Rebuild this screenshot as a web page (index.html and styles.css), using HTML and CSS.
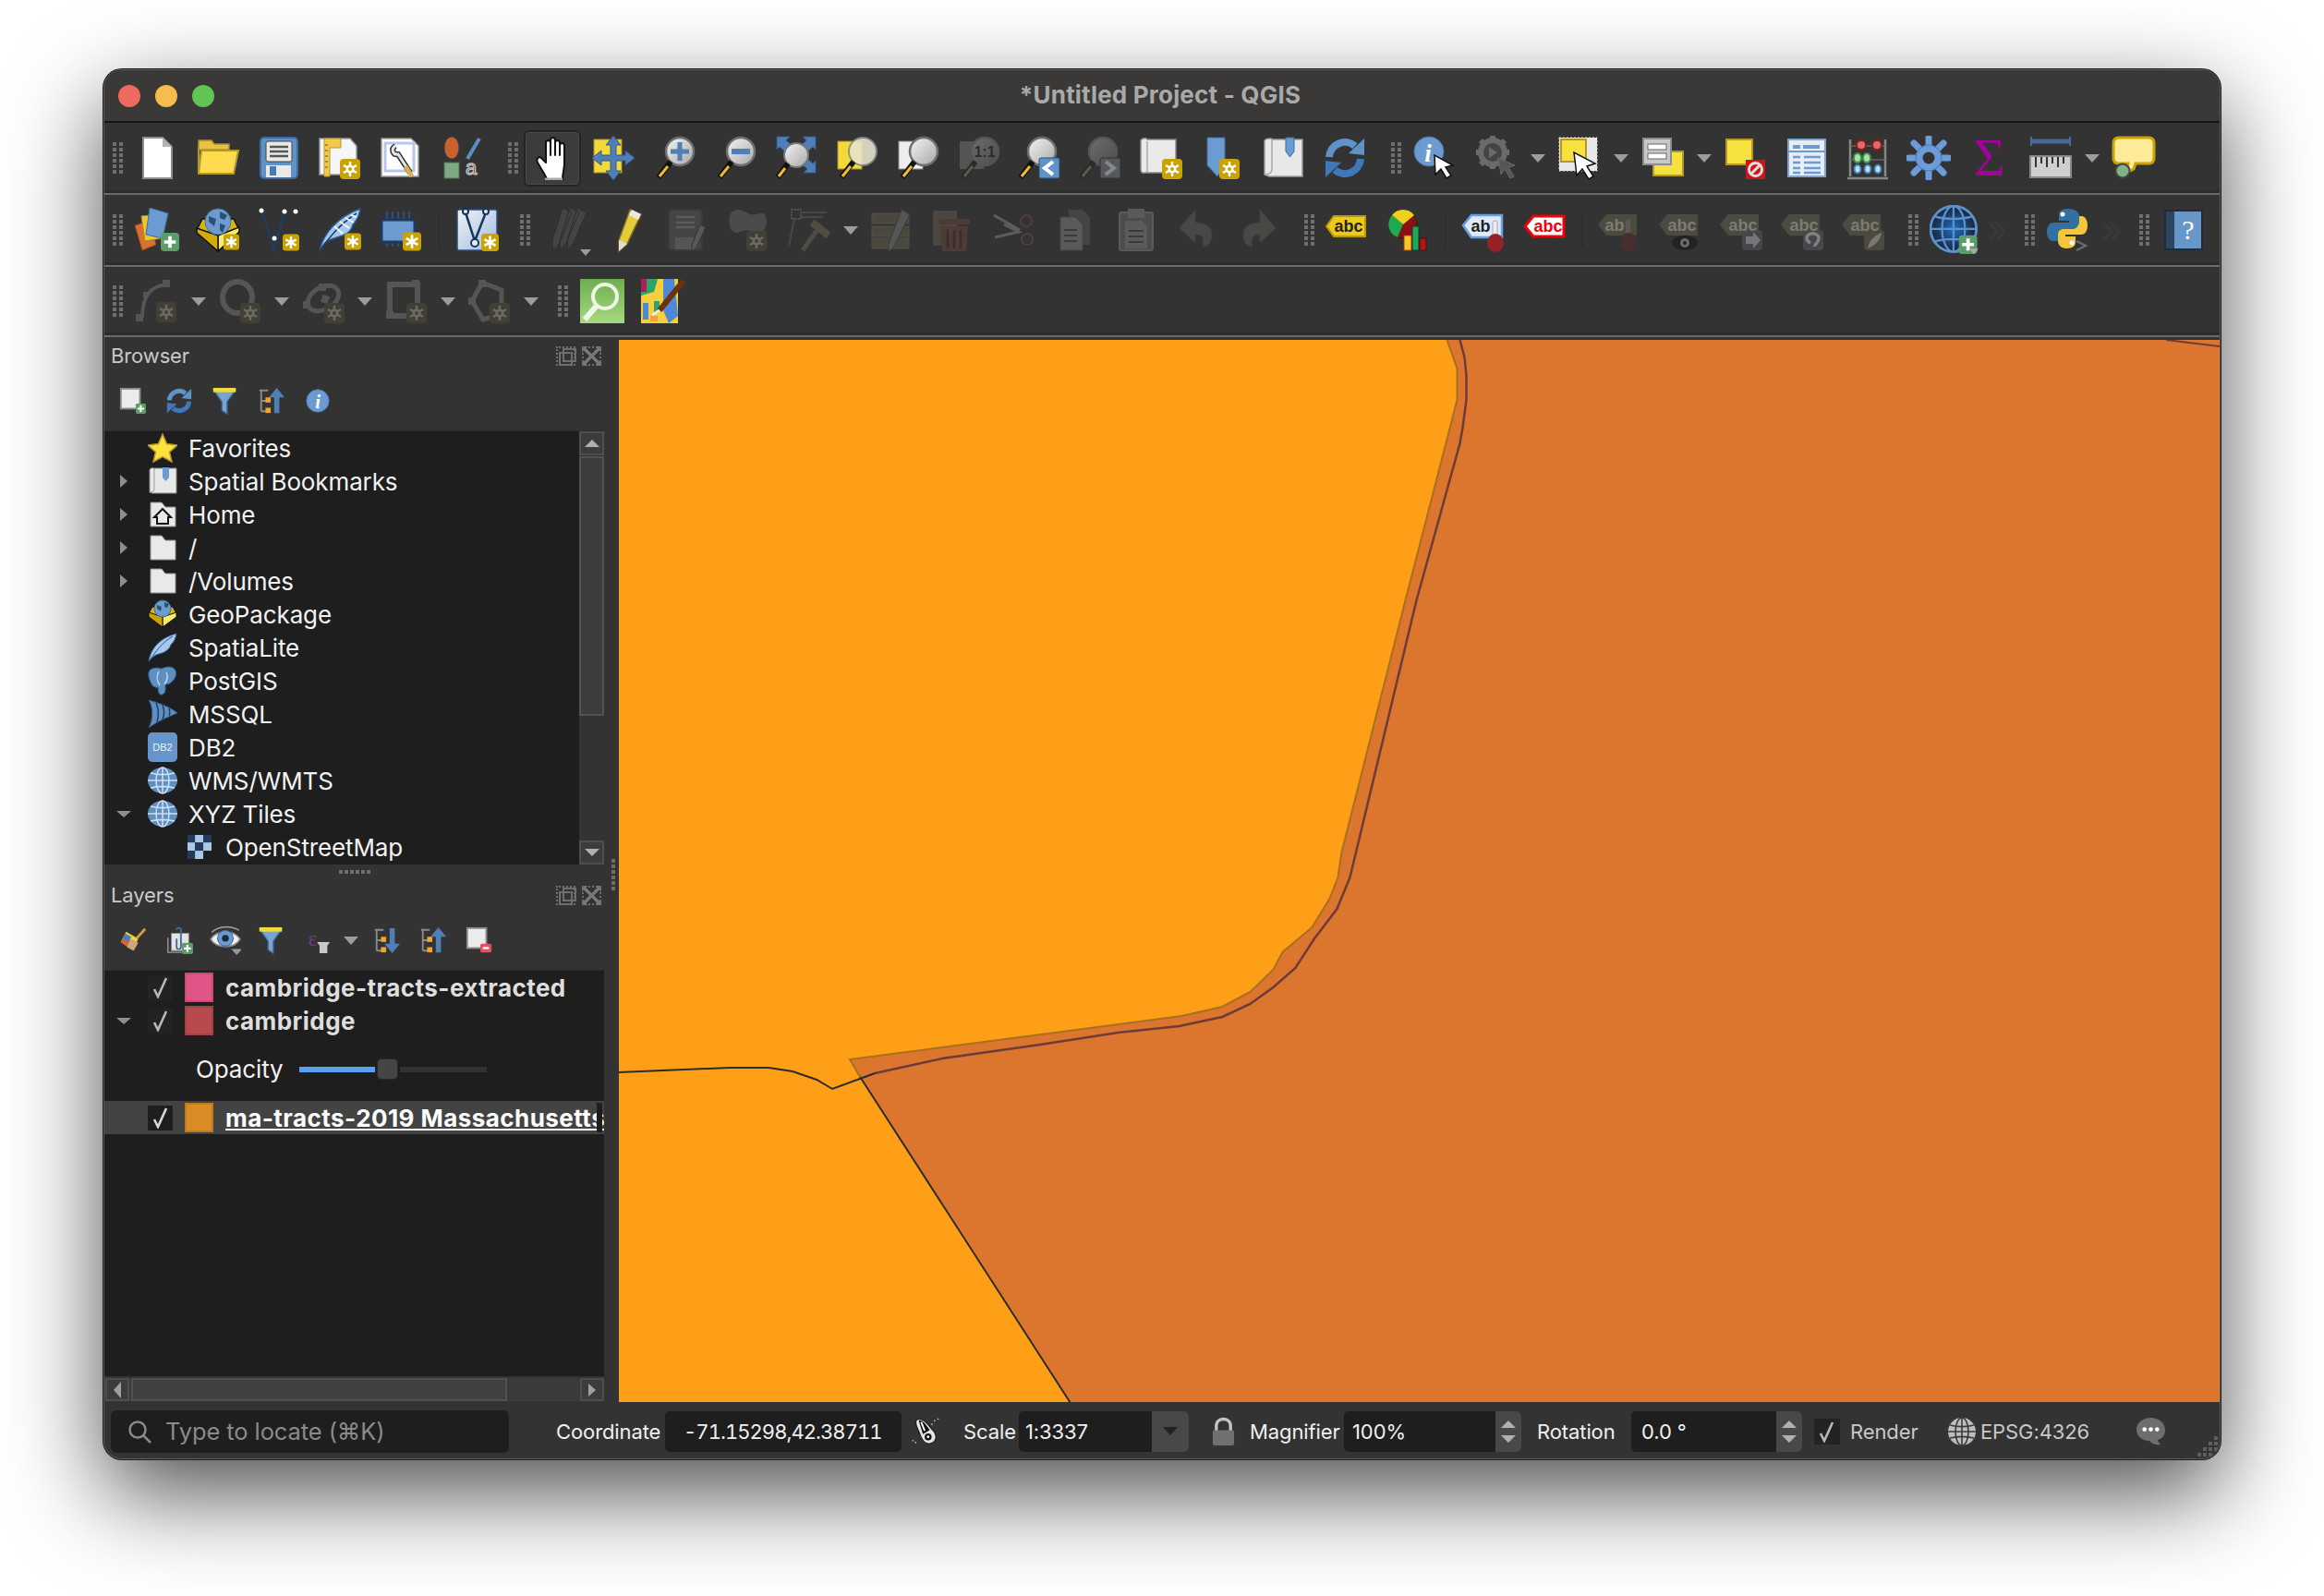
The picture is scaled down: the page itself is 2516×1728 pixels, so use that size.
FILE: index.html
```html
<!DOCTYPE html>
<html lang="en">
<head>
  <meta charset="UTF-8">
  <title>*Untitled Project - QGIS</title>
  <link rel="stylesheet" href="styles.css">
</head>
<body>

<!-- shared icons -->
<svg class="defs" xmlns="http://www.w3.org/2000/svg">
  <defs>
    <linearGradient id="gg" x1="0" y1="0" x2="1" y2="1"><stop offset="0" stop-color="#f4f4f4"/><stop offset="1" stop-color="#a8a8a8"/></linearGradient>
    <linearGradient id="gd" x1="0" y1="0" x2="1" y2="1"><stop offset="0" stop-color="#6e6e6e"/><stop offset="1" stop-color="#4c4c4c"/></linearGradient>
    <linearGradient id="gb" x1="0" y1="0" x2="1" y2="1"><stop offset="0" stop-color="#eef2f8"/><stop offset="1" stop-color="#a3bbd9"/></linearGradient>
    <radialGradient id="gw"><stop offset="0" stop-color="#1f6fc0"/><stop offset="1" stop-color="#1a2433"/></radialGradient>
    <linearGradient id="gh" x1="0" y1="1" x2="0" y2="0"><stop offset="0" stop-color="#a6d97e"/><stop offset="1" stop-color="#6fae52"/></linearGradient>
  </defs>

  <!-- badges -->
  <symbol id="b-gold" viewBox="0 0 22 22"><rect width="22" height="22" rx="4" fill="#c9a204"/><path d="M11 3v16M4 7l14 8M18 7L4 15" stroke="#fff" stroke-width="3"/></symbol>
  <symbol id="b-gear" viewBox="0 0 22 22"><rect width="22" height="22" rx="4" fill="#c9a204"/><path d="M11 3v16M4 7l14 8M18 7L4 15" stroke="#fff" stroke-width="2.4"/><circle cx="11" cy="11" r="4.5" fill="#fff"/><circle cx="11" cy="11" r="2" fill="#c9a204"/></symbol>
  <symbol id="b-off" viewBox="0 0 22 22"><rect width="22" height="22" rx="4" fill="#423f36"/><path d="M11 3v16M4 7l14 8M18 7L4 15" stroke="#6e6b62" stroke-width="2.4"/><circle cx="11" cy="11" r="4.5" fill="#6e6b62"/><circle cx="11" cy="11" r="2" fill="#423f36"/></symbol>
  <symbol id="b-plus" viewBox="0 0 22 22"><rect width="22" height="22" rx="4" fill="#5c9c66"/><path d="M11 4v14M4 11h14" stroke="#fff" stroke-width="4"/></symbol>

  <symbol id="mag" viewBox="0 0 48 48"><circle cx="30" cy="17" r="15" fill="url(#gg)" stroke="#6f6f6f" stroke-width="2.5"/><path d="M20 28L7 45" stroke="#111" stroke-width="6"/><path d="M17 33L8 44" stroke="#f0bb2e" stroke-width="3"/></symbol>
  <symbol id="mag-off" viewBox="0 0 48 48"><circle cx="30" cy="17" r="15" fill="url(#gd)" stroke="#555" stroke-width="2.5"/><path d="M20 28L7 45" stroke="#2a2a2a" stroke-width="6"/><path d="M17 33L8 44" stroke="#5b5a4c" stroke-width="3"/></symbol>
  <symbol id="s-check" viewBox="0 0 24 24"><path d="M5 14l4 8L18 2" fill="none" stroke="currentColor" stroke-width="2.6"/></symbol>

  <!-- row 1 -->
  <symbol id="i-new" viewBox="0 0 48 48"><path d="M9 2h21l10 10v34H9z" fill="#fff" stroke="#8d8d8d" stroke-width="2"/><path d="M30 2v10h10z" fill="#b4b4b4"/></symbol>
  <symbol id="i-open" viewBox="0 0 48 48"><path d="M3 5h14l3 4h16v6H3z" fill="#e8c440" stroke="#a98f2c" stroke-width="1.5"/><path d="M3 41L6 16h40l-5 25z" fill="#ffdb4f" stroke="#b3982f" stroke-width="2"/><path d="M3 41V12" stroke="#b3982f" stroke-width="2"/></symbol>
  <symbol id="i-save" viewBox="0 0 48 48"><rect x="4" y="2" width="40" height="44" rx="4" fill="#5f93c8" stroke="#3f6c9e" stroke-width="2"/><rect x="10" y="6" width="28" height="22" rx="2" fill="#e9e9e9" stroke="#444"/><path d="M14 12h20M14 17h20M14 22h20" stroke="#555" stroke-width="2.5"/><rect x="10" y="32" width="27" height="13" fill="#e9e9e9"/><rect x="14" y="33" width="7" height="10" fill="#4a7bad"/></symbol>
  <symbol id="i-layout" viewBox="0 0 48 48"><path d="M2 3h33l7 8v31H2z" fill="#f4f6fa" stroke="#9a9a9a" stroke-width="1.5"/><path d="M7 3h18v10H13v31H7z" fill="#f3c94a" stroke="#b3982f"/><path d="M8 10h3M8 16h3M8 22h3M8 28h3M8 34h3" stroke="#96792a" stroke-width="1.4"/><use href="#b-gear" x="24" y="25" width="22" height="22"/></symbol>
  <symbol id="i-layoutmgr" viewBox="0 0 48 48"><path d="M3 3h32l8 8v33H3z" fill="#fff" stroke="#9a9a9a" stroke-width="1.5"/><rect x="7" y="8" width="31" height="30" fill="none" stroke="#b7c7ea" stroke-width="3"/><path d="M18 11c-5 3-3 10 3 9l13 20" stroke="#333" stroke-width="6" fill="none"/><path d="M18 11c-5 3-3 10 3 9l13 20" stroke="#e4e4e4" stroke-width="3" fill="none"/><path d="M29 33l7 11" stroke="#d8b04a" stroke-width="5"/></symbol>
  <symbol id="i-style" viewBox="0 0 48 48"><ellipse cx="13" cy="13" rx="8" ry="12" fill="#c9622f" stroke="#444"/><path d="M43 3L30 25" stroke="#5a8fc4" stroke-width="4"/><rect x="5" y="29" width="16" height="17" fill="#7fa982" stroke="#4f6f52"/></symbol>
  <symbol id="i-hand" viewBox="0 0 48 48"><path d="M16 47C14 41 9 35 6 29c-2-4 1-7 4-5l5 5V8c0-4 5-4 5 0v13V5c0-4 5-4 5 0v16V8c0-4 5-4 5 0v13-10c0-4 5-4 5 0v19c0 6-2 10-2 17z" fill="#fff" stroke="#111" stroke-width="2" stroke-linejoin="round"/><path d="M14 47h19" stroke="#aaa" stroke-width="3"/></symbol>
  <symbol id="i-pan" viewBox="0 0 48 48"><rect x="3" y="4" width="30" height="36" fill="#f4d93a" stroke="#a98f2c"/><path d="M24 0l8 10h-5v11h10v-5l10 8-10 8v-5H27v11h5l-8 10-8-10h5V27H11v5L1 24l10-8v5h10V10h-5z" fill="#4f7fb4" stroke="#2f5a8c"/></symbol>
  <symbol id="i-zin" viewBox="0 0 48 48"><use href="#mag" width="48" height="48"/><path d="M30 7v20M20 17h20" stroke="#4f7fb4" stroke-width="5"/></symbol>
  <symbol id="i-zout" viewBox="0 0 48 48"><use href="#mag" width="48" height="48"/><path d="M20 17h20" stroke="#4f7fb4" stroke-width="6"/></symbol>
  <symbol id="i-zfull" viewBox="0 0 48 48"><path d="M3 1h14l-4 4 8 7-7 7-8-7-3 3zM45 1H31l4 4-8 7 7 7 8-7 3 3zM45 40H32l4-4-7-6 6-6 7 6 3-3z" fill="#4f7fb4" stroke="#2f5a8c"/><circle cx="24" cy="21" r="13" fill="url(#gg)" stroke="#777" stroke-width="2"/><path d="M15 30L4 45" stroke="#111" stroke-width="6"/><path d="M12 35L5 44" stroke="#f0bb2e" stroke-width="3"/></symbol>
  <symbol id="i-zsel" viewBox="0 0 48 48"><rect x="3" y="6" width="26" height="30" fill="#f4d93a" stroke="#a98f2c"/><circle cx="30" cy="17" r="15" fill="#e8e3cc" opacity=".9" stroke="#8b8b8b" stroke-width="2"/><path d="M20 28L7 45" stroke="#111" stroke-width="6"/><path d="M17 33L8 44" stroke="#f0bb2e" stroke-width="3"/></symbol>
  <symbol id="i-zlayer" viewBox="0 0 48 48"><rect x="3" y="6" width="26" height="30" fill="#eee" stroke="#8b8b8b"/><use href="#mag" width="48" height="48"/></symbol>
  <symbol id="i-z11" viewBox="0 0 48 48"><rect x="3" y="6" width="26" height="30" fill="#555"/><use href="#mag-off" width="48" height="48"/></symbol>
  <symbol id="i-zlast" viewBox="0 0 48 48"><use href="#mag" width="48" height="48" x="-4"/><rect x="23" y="24" width="22" height="22" rx="2" fill="#5f93c8" stroke="#2f4f73"/><path d="M38 28l-9 7 9 7" stroke="#fff" stroke-width="4" fill="none"/></symbol>
  <symbol id="i-znext" viewBox="0 0 48 48"><use href="#mag-off" width="48" height="48" x="-4"/><rect x="23" y="24" width="22" height="22" rx="2" fill="#55585c" stroke="#333"/><path d="M29 28l9 7-9 7" stroke="#888" stroke-width="4" fill="none"/></symbol>
  <symbol id="i-newmap" viewBox="0 0 48 48"><path d="M8 4h31v36H10l-7 0c-2 0-2-3-2-5V6c0-4 7-4 7-2z" fill="#eaeaea" stroke="#8a8a8a" stroke-width="1.5"/><path d="M3 40c5 0 6-2 5-6V6" fill="none" stroke="#aaa" stroke-width="1.5"/><use href="#b-gear" x="24" y="25" width="22" height="22"/></symbol>
  <symbol id="i-newbm" viewBox="0 0 48 48"><path d="M7 2h19v30l-8 12-11-12z" fill="#6b9bd1" stroke="#3f6c9e"/><use href="#b-gear" x="20" y="25" width="22" height="22"/></symbol>
  <symbol id="i-bm" viewBox="0 0 48 48"><path d="M11 4h33v40H8l-5-2V6c0-3 8-4 8-2z" fill="#e8e8e8" stroke="#9a9a9a" stroke-width="1.5"/><path d="M3 42c5 0 8-2 8-6V4" fill="none" stroke="#aaa" stroke-width="1.5"/><path d="M26 2h9v15l-4.500 6-4.500-6z" fill="#6b9bd1" stroke="#3f6c9e"/></symbol>
  <symbol id="i-refresh" viewBox="0 0 48 48"><path d="M7 23A17 17 0 0 1 35 11" fill="none" stroke="#5f93c8" stroke-width="8"/><path d="M28 19L45 21V3z" fill="#5f93c8"/><path d="M41 25A17 17 0 0 1 13 37" fill="none" stroke="#3f78b8" stroke-width="8"/><path d="M20 29L3 27V45z" fill="#3f78b8"/></symbol>
  <symbol id="i-identify" viewBox="0 0 48 48"><circle cx="17" cy="17" r="16" fill="#6b9bd1" stroke="#4a7bad"/></symbol>
  <symbol id="i-cursor" viewBox="0 0 48 48"><path d="M23 21l1 21 6-6 6 10 5-3-6-9 8-2z" fill="#fff" stroke="#111" stroke-width="1.5"/></symbol>
  <symbol id="i-actions" viewBox="0 0 48 48"><circle cx="20" cy="18" r="13" fill="#444" stroke="#6a6a6a" stroke-width="6"/><path d="M20 0v6M20 30v6M2 18h6M32 18h6M7 5l4 4M33 5l-4 4M7 31l4-4" stroke="#6a6a6a" stroke-width="6"/><path d="M16 12l9 6-9 6z" fill="#6a6a6a"/><path d="M26 24l3 18 4-6 6 10 4-2-6-10 7-2z" fill="#565656" stroke="#6a6a6a"/></symbol>
  <symbol id="i-select" viewBox="0 0 48 48"><rect x="2" y="2" width="41" height="36" fill="#e8e8e8" stroke="#ddd" stroke-dasharray="2 2"/><rect x="4" y="4" width="27" height="24" fill="#f7e13e" stroke="#b3982f" stroke-width="2"/><path d="M18 18l3 25 6-7 7 11 5-3-7-11 9-3z" fill="#fff" stroke="#111" stroke-width="1.5"/></symbol>
  <symbol id="i-selby" viewBox="0 0 48 48"><rect x="14" y="17" width="32" height="26" fill="#f7e13e" stroke="#b3982f" stroke-width="2"/><rect x="3" y="3" width="30" height="28" fill="#c8c8c8" stroke="#8c8c8c" stroke-width="2"/><rect x="8" y="9" width="20" height="6" fill="#fff" stroke="#666"/><rect x="8" y="19" width="20" height="6" fill="#fff" stroke="#666"/></symbol>
  <symbol id="i-desel" viewBox="0 0 48 48"><rect x="3" y="4" width="28" height="27" fill="#f7e13e" stroke="#b3982f" stroke-width="2"/><rect x="24" y="26" width="21" height="21" fill="#c8171b"/><circle cx="34.500" cy="36.500" r="7" fill="none" stroke="#f3d9d9" stroke-width="3"/><path d="M30 41l9-9" stroke="#f3d9d9" stroke-width="3"/></symbol>
  <symbol id="i-table" viewBox="0 0 48 48"><rect x="4" y="4" width="40" height="40" fill="#e6edf7" stroke="#7ea3cf" stroke-width="2"/><path d="M9 10h8v4H9zM20 10h18v4H20z" fill="#6b9bd1"/><path d="M4 17h40" stroke="#6b9bd1" stroke-width="2"/><path d="M9 23h8M21 23h18M9 29h8M21 29h18M9 35h8M21 35h18M9 40h8M21 40h18" stroke="#6b9bd1" stroke-width="2.5"/></symbol>
  <symbol id="i-calc" viewBox="0 0 48 48"><path d="M5 4v40M43 4v40M2 46h44" stroke="#888" stroke-width="2.500"/><path d="M5 11h38M5 26h38" stroke="#666" stroke-width="1.500"/><circle cx="17" cy="10" r="5" fill="#e06a6a" stroke="#8c1d1d" stroke-width="2"/><circle cx="34" cy="10" r="5" fill="#e06a6a" stroke="#8c1d1d" stroke-width="2"/><ellipse cx="13" cy="24" rx="4" ry="5" fill="#a9e0a0" stroke="#3f8f4a" stroke-width="2"/><ellipse cx="23" cy="24" rx="4" ry="5" fill="#a9e0a0" stroke="#3f8f4a" stroke-width="2"/><ellipse cx="13" cy="36" rx="3.500" ry="4.500" fill="#b8e0f4" stroke="#3f7fb4" stroke-width="2"/><ellipse cx="24" cy="36" rx="3.500" ry="4.500" fill="#b8e0f4" stroke="#3f7fb4" stroke-width="2"/><ellipse cx="35" cy="36" rx="3.500" ry="4.500" fill="#b8e0f4" stroke="#3f7fb4" stroke-width="2"/></symbol>
  <symbol id="i-gear" viewBox="0 0 48 48"><path d="M24 2v44M2 24h44M8 8l32 32M40 8L8 40" stroke="#6b9bd9" stroke-width="7" stroke-linecap="round"/><circle cx="24" cy="24" r="14" fill="#6b9bd9" stroke="#4a78b4"/><circle cx="24" cy="24" r="6.500" fill="#333"/></symbol>
  <symbol id="i-measure" viewBox="0 0 48 48"><path d="M4 6h40" stroke="#446b9a" stroke-width="5"/><path d="M3 1v10M45 1v10" stroke="#446b9a" stroke-width="2"/><rect x="2" y="22" width="44" height="23" fill="#cfcfcf" stroke="#888" stroke-width="2"/><path d="M8 23v11M14 23v7M20 23v11M26 23v7M32 23v11M38 23v7" stroke="#333" stroke-width="2"/></symbol>
  <symbol id="i-annot" viewBox="0 0 48 48"><path d="M8 2h32c4 0 6 2 6 6v16c0 4-2 6-6 6H26l-2 6-8 4 2-10H8c-4 0-6-2-6-6V8c0-4 2-6 6-6z" fill="#fdeb97" stroke="#c9a204" stroke-width="3"/><circle cx="12" cy="38" r="7.500" fill="#7fb386" stroke="#444" stroke-width="2"/></symbol>

  <!-- row 2 -->
  <symbol id="i-dsm" viewBox="0 0 48 48"><path d="M0 19l16-5 7 26-15 6z" fill="#d8702f" stroke="#8a4a20"/><path d="M7 9l18-2 4 26-18 3z" fill="#f4c62e" stroke="#a98f2c"/><path d="M16 0l20 6-6 27-18-4z" fill="#6b9bd1" stroke="#3f6c9e"/><use href="#b-plus" x="28" y="26" width="20" height="22"/></symbol>
  <symbol id="i-gpkg" viewBox="0 0 48 48"><path d="M1 24l23 23 23-23-6-12H7z" fill="#d9b50c" stroke="#111" stroke-width="1.500"/><path d="M24 30l23-9v5L24 47z" fill="#f7ee6a" stroke="#111" stroke-width="1.500"/><path d="M1 22l23 8v17L1 27z" fill="#d3ad06" stroke="#111" stroke-width="1.500"/><circle cx="24" cy="15" r="14" fill="#6b9bd1" stroke="#4a6f9a"/><path d="M14 9l8 3-2 8-6-5zM26 4l8 4-3 5-5-2zM26 17l6 2-3 8-3-3z" fill="#2f4f73"/><use href="#b-gold" x="30" y="27" width="17" height="20"/></symbol>
  <symbol id="i-verts" viewBox="0 0 48 48"><path d="M5 2l14 43L30 4" stroke="#1f3d63" stroke-width="2.500" fill="none"/><circle cx="5" cy="3" r="2.500" fill="#fff"/><circle cx="30" cy="4" r="2.500" fill="#fff"/><circle cx="42" cy="4" r="2.500" fill="#fff"/><circle cx="19" cy="33" r="2.500" fill="#fff"/><use href="#b-gold" x="28" y="28" width="18" height="19"/></symbol>
  <symbol id="i-feather" viewBox="0 0 48 48"><path d="M2 47C5 30 20 10 46 1c-1 8-4 13-8 17-1 6-6 10-11 12-7 3-15 3-20 9z" fill="#a6c8ee" stroke="#2d5a8f" stroke-width="1.500"/><path d="M2 47C12 32 26 16 42 6" stroke="#1f3d63" stroke-width="1.500" fill="none"/><path d="M18 20l9 8M24 15l10 7M30 11l9 5M36 8l6 2" stroke="#f2f7fd" stroke-width="2" fill="none"/><use href="#b-gold" x="29" y="26" width="18" height="21"/></symbol>
  <symbol id="i-mesh" viewBox="0 0 48 48"><path d="M9 4v38M15 4v38M21 4v38M27 4v38M33 4v38" stroke="#2a4f80" stroke-width="2"/><rect x="3" y="13" width="36" height="24" rx="2" fill="#6b9bd1" stroke="#1c3a62" stroke-width="3"/><use href="#b-gold" x="26" y="26" width="20" height="21"/></symbol>
  <symbol id="i-virtual" viewBox="0 0 48 48"><rect x="2" y="2" width="43" height="44" rx="2" fill="url(#gb)" stroke="#2c4f80" stroke-width="1.500"/><path d="M11 5l10 31L33 5" stroke="#14365f" stroke-width="2.500" fill="none"/><circle cx="21" cy="38" r="4" fill="#eee" stroke="#14365f" stroke-width="2"/><circle cx="11" cy="4" r="3" fill="#eee" stroke="#14365f" stroke-width="2"/><circle cx="33" cy="4" r="3" fill="#eee" stroke="#14365f" stroke-width="2"/><use href="#b-gold" x="28" y="28" width="19" height="19"/></symbol>
  <symbol id="i-pencils" viewBox="0 0 48 48"><path d="M20 0l10 5-13 33-7 8-1-11zM28 0l10 5-14 33-6 8-1-11zM36 0l10 5-14 33-6 8-1-11z" fill="#464442" stroke="#2f2e2c"/></symbol>
  <symbol id="i-pencil" viewBox="0 0 48 48"><path d="M28 2l12 5-15 32-9 8 0-12z" fill="#e4cb3c" stroke="#7d6d1c" stroke-width="1.500"/><path d="M30 2l10 5-3 6-10-5z" fill="#e8e8e8"/><path d="M16 35l9 4-9 8z" fill="#ddd"/></symbol>
  <symbol id="i-saveedit" viewBox="0 0 48 48"><rect x="4" y="2" width="36" height="44" rx="4" fill="#454545" stroke="#3a3a3a" stroke-width="2"/><path d="M12 10h20M12 16h20M12 21h20" stroke="#5c5c5c" stroke-width="2.500"/><rect x="11" y="32" width="20" height="13" fill="#555"/><path d="M38 18l6 3-10 22-5 4v-7z" fill="#5a5855" stroke="#353535"/></symbol>
  <symbol id="i-addfeat" viewBox="0 0 48 48"><path d="M4 8c3-7 12-7 18-3 4 3 9 3 15 1 7-1 8 7 6 14-2 8-10 7-16 5-5-2-9 0-14 2C5 28 2 18 4 8z" fill="#4b4b4b"/><use href="#b-off" x="22" y="24" width="22" height="24"/></symbol>
  <symbol id="i-vtool" viewBox="0 0 48 48"><rect x="5" y="2" width="10" height="10" fill="none" stroke="#505050" stroke-width="2" stroke-dasharray="2 1"/><path d="M8 12L2 42M15 5h28M15 10h24" stroke="#474747" fill="none" stroke-width="2"/><path d="M17 46l20-28" stroke="#4f4c42" stroke-width="5"/><path d="M27 16l18 14" stroke="#4f4c42" stroke-width="8"/></symbol>
  <symbol id="i-modattr" viewBox="0 0 48 48"><rect x="2" y="6" width="40" height="11" fill="#4a473c" stroke="#55524a"/><rect x="2" y="20" width="40" height="11" fill="#4a473c" stroke="#55524a"/><rect x="2" y="33" width="40" height="11" fill="#4a473c" stroke="#55524a"/><path d="M34 2l9 5-18 37-5 3v-8z" fill="#555" stroke="#3a3a3a"/></symbol>
  <symbol id="i-del" viewBox="0 0 48 48"><rect x="3" y="4" width="24" height="36" fill="#4a473c" stroke="#55524a"/><rect x="8" y="12" width="34" height="6" rx="2" fill="#4d3b38"/><path d="M10 20h30l-2 27H12z" fill="#4d3b38"/><path d="M18 24v20M25 24v20M32 24v20" stroke="#3b2d2b" stroke-width="2.500"/></symbol>
  <symbol id="i-cut" viewBox="0 0 48 48"><path d="M2 8l28 16M3 32l26-6-16-8" stroke="#5c5c5c" stroke-width="3" fill="none"/><circle cx="37" cy="14" r="6" fill="none" stroke="#5c4040" stroke-width="1.500"/><circle cx="38" cy="34" r="6" fill="none" stroke="#5c4040" stroke-width="1.500"/></symbol>
  <symbol id="i-copy" viewBox="0 0 48 48"><path d="M16 2h16l8 8v30H24z" fill="#444"/><path d="M8 10h16l8 8v28H8z" fill="#5a5a5a" stroke="#444"/><path d="M12 24h14M12 30h14M12 36h14" stroke="#3a3a3a" stroke-width="2"/></symbol>
  <symbol id="i-paste" viewBox="0 0 48 48"><rect x="6" y="5" width="36" height="41" rx="2" fill="#4c4c4c" stroke="#5a5a5a" stroke-width="2"/><rect x="15" y="1" width="18" height="10" fill="#5a5a5a"/><path d="M12 14h18l6 6v24H12z" fill="#5a5a5a"/><path d="M16 25h16M16 31h16M16 37h16" stroke="#3a3a3a" stroke-width="2"/></symbol>
  <symbol id="i-undo" viewBox="0 0 48 48"><path d="M22 2L5 22l17 16V29c7 0 10 2 8 13 8-1 10-7 10-13 0-9-8-13-18-13z" fill="#4a4846" stroke="#424038"/></symbol>
  <symbol id="i-redo" viewBox="0 0 48 48"><path d="M26 2l17 20-17 16V29c-7 0-10 2-8 13-8-1-10-7-10-13 0-9 8-13 18-13z" fill="#4a4846" stroke="#424038"/></symbol>
  <symbol id="i-abc" viewBox="0 0 48 48"><path d="M3 20L11 9h34v22H11z" fill="#ecc91c" stroke="#b99b0a" stroke-width="2"/></symbol>
  <symbol id="i-diagram" viewBox="0 0 48 48"><circle cx="20" cy="18" r="15" fill="#8c1010" stroke="#222"/><path d="M20 18L8 8a15 15 0 0 1 24 0z" fill="#ecd21c"/><path d="M20 18L8 8a15 15 0 0 0 6 24z" fill="#1faa4f"/><rect x="21" y="30" width="8" height="16" fill="#f6c81e" stroke="#b33"/><rect x="30" y="20" width="7" height="26" fill="#1faa4f" stroke="#134"/><rect x="38" y="33" width="7" height="13" fill="#b01515" stroke="#411"/></symbol>
  <symbol id="i-pin" viewBox="0 0 48 48"><path d="M2 19L11 8h33v24H11z" fill="#ddeafa" stroke="#6b9fe4" stroke-width="2.500"/><rect x="34" y="14" width="5" height="18" rx="2" fill="#eee" stroke="#aaa"/><ellipse cx="37" cy="38" rx="9" ry="10" fill="#952226"/></symbol>
  <symbol id="i-hl" viewBox="0 0 48 48"><path d="M3 20L12 9h33v22H12z" fill="#fff" stroke="#f00006" stroke-width="3"/></symbol>
  <symbol id="l-off" viewBox="0 0 48 48"><path d="M2 18L11 7h33v23H11z" fill="#4c4b40"/></symbol>
  <symbol id="i-pinoff" viewBox="0 0 48 48"><use href="#l-off" width="48" height="48"/><rect x="32" y="12" width="5" height="16" rx="2" fill="#5a5a52"/><ellipse cx="35" cy="37" rx="9" ry="10" fill="#46302f"/></symbol>
  <symbol id="i-eyeoff" viewBox="0 0 48 48"><use href="#l-off" width="48" height="48"/><ellipse cx="30" cy="38" rx="14" ry="8" fill="#222"/><circle cx="30" cy="38" r="5" fill="#6a6a6a"/><circle cx="30" cy="38" r="2" fill="#222"/></symbol>
  <symbol id="i-arrowoff" viewBox="0 0 48 48"><use href="#l-off" width="48" height="48"/><rect x="26" y="24" width="22" height="22" rx="4" fill="#46474a"/><path d="M30 31h8v-5l8 9-8 9v-5h-8z" fill="#777"/></symbol>
  <symbol id="i-rotoff" viewBox="0 0 48 48"><use href="#l-off" width="48" height="48"/><rect x="26" y="24" width="22" height="22" rx="4" fill="#46474a"/><path d="M39 42c-1-3 4-4 4-9 0-7-13-7-13 0 0 3 2 4 4 5" fill="none" stroke="#808080" stroke-width="3.500"/></symbol>
  <symbol id="i-chgoff" viewBox="0 0 48 48"><use href="#l-off" width="48" height="48"/><rect x="26" y="24" width="22" height="22" rx="4" fill="#4c4a3e"/><path d="M30 44c1-8 7-14 15-17-1 8-7 14-15 17z" fill="#777"/></symbol>
  <symbol id="i-globe" viewBox="0 0 48 48"><circle cx="23" cy="23" r="22" fill="url(#gw)" stroke="#5b91cf" stroke-width="2.500"/><ellipse cx="23" cy="23" rx="11" ry="22" fill="none" stroke="#5b91cf" stroke-width="2"/><path d="M23 1v44M1 23h44M5 11c10 3 26 3 36 0M5 35c10-3 26-3 36 0" fill="none" stroke="#5b91cf" stroke-width="2"/><use href="#b-plus" x="28" y="28" width="18" height="20"/><path d="M38 42h9l-4.500 5z" fill="#aaa"/></symbol>
  <symbol id="i-python" viewBox="0 0 48 48"><path d="M23 1c-9 0-10 4-10 8v5h11v2H7c-5 0-7 5-7 10s2 10 7 10h5v-6c0-4 3-7 7-7h10c3 0 6-2 6-6V9c0-4-4-8-12-8z" fill="#336f9f"/><circle cx="17" cy="7" r="2.500" fill="#fff"/><path d="M21 44c9 0 10-4 10-8v-5H20v-2h17c5 0 7-5 7-10S42 9 37 9h-2v6c0 4-3 8-7 8H18c-3 0-6 2-6 6v7c0 4 3 8 9 8z" fill="#f5c63c"/><circle cx="27" cy="38" r="2.500" fill="#fff"/><path d="M32 36l10 5-10 5" fill="none" stroke="#6a6a6a" stroke-width="2.500"/></symbol>
  <symbol id="i-help" viewBox="0 0 48 48"><rect x="3" y="2" width="42" height="44" fill="#222a33"/><rect x="5" y="4" width="9" height="40" fill="#2c4560"/><rect x="14" y="4" width="29" height="40" fill="#6796c8"/></symbol>

  <!-- row 3 -->
  <symbol id="i-curve" viewBox="0 0 48 48"><path d="M8 42C8 22 14 8 34 6" fill="none" stroke="#555" stroke-width="4"/><rect x="1" y="38" width="8" height="8" fill="#555"/><rect x="30" y="1" width="8" height="8" fill="#555"/><rect x="9" y="14" width="6" height="6" fill="#555"/><use href="#b-off" x="23" y="25" width="22" height="22"/></symbol>
  <symbol id="i-circle" viewBox="0 0 48 48"><ellipse cx="21" cy="20" rx="16" ry="17" fill="none" stroke="#555" stroke-width="6"/><use href="#b-off" x="24" y="26" width="22" height="22"/></symbol>
  <symbol id="i-ellipse" viewBox="0 0 48 48"><ellipse cx="24" cy="21" rx="18" ry="12" fill="none" stroke="#555" stroke-width="5" transform="rotate(-30 24 21)"/><rect x="2" y="24" width="8" height="8" fill="#555"/><rect x="19" y="5" width="8" height="8" fill="#555"/><rect x="22" y="18" width="8" height="8" fill="#555" transform="rotate(20 26 22)"/><use href="#b-off" x="25" y="26" width="22" height="22"/></symbol>
  <symbol id="i-rect" viewBox="0 0 48 48"><path d="M6 6h30v34H6z" fill="none" stroke="#555" stroke-width="6"/><rect x="30" y="1" width="8" height="8" fill="#555"/><rect x="2" y="35" width="8" height="8" fill="#555"/><use href="#b-off" x="24" y="26" width="22" height="22"/></symbol>
  <symbol id="i-poly" viewBox="0 0 48 48"><path d="M16 4L5 24l12 20 20-6 0-26z" fill="none" stroke="#555" stroke-width="5"/><rect x="12" y="1" width="8" height="8" fill="#555"/><rect x="1" y="20" width="8" height="8" fill="#555"/><use href="#b-off" x="24" y="26" width="22" height="22"/></symbol>
  <symbol id="i-hub" viewBox="0 0 48 48"><rect width="48" height="48" fill="url(#gh)"/><circle cx="27" cy="19" r="13" fill="none" stroke="#eef7e8" stroke-width="4"/><path d="M18 29L5 44" stroke="#eef7e8" stroke-width="6"/></symbol>
  <symbol id="i-map" viewBox="0 0 48 48"><rect width="40" height="48" fill="#f5cf3c"/><path d="M24 0h12l4 40-10 8-6-14z" fill="#4f88d9"/><path d="M0 0h18l-4 14-14 4z" fill="#2ea36a"/><path d="M0 0h6v14H0z" fill="#a9205a"/><path d="M14 24h6v12h-6z" fill="#2ea36a"/><path d="M2 26h6v18H2z" fill="#4f88d9"/><path d="M10 40h8v6h-8z" fill="#f2a13c"/><path d="M46 2L20 34" stroke="#6a3310" stroke-width="6"/><path d="M20 34l-8 5" stroke="#eee" stroke-width="3"/></symbol>

  <!-- browser panel -->
  <symbol id="p-add" viewBox="0 0 32 32"><rect x="2" y="2" width="22" height="23" fill="#ececec" stroke="#8c8c8c" stroke-width="2"/><use href="#b-plus" x="19" y="19" width="12" height="12"/></symbol>
  <symbol id="p-funnel" viewBox="0 0 32 32"><path d="M2 3h26l-10 14v14l-6-4V17z" fill="#7ba3d0" stroke="#3f6c9e" stroke-width="1.500"/><rect x="2" y="1" width="26" height="5" fill="#f2dc3a"/></symbol>
  <symbol id="p-collapse" viewBox="0 0 32 32"><path d="M2 4h10M4 4v24M4 16h8M4 28h8" stroke="#8a8a8a" stroke-width="2" fill="none"/><rect x="9" y="12" width="6" height="6" fill="#f2a42e"/><rect x="9" y="24" width="6" height="6" fill="#f2a42e"/><path d="M22 1l9 11h-6v18h-6V12h-6z" fill="#4f7fb4"/></symbol>
  <symbol id="p-expand" viewBox="0 0 32 32"><path d="M2 4h10M4 4v24M4 16h8M4 28h8" stroke="#8a8a8a" stroke-width="2" fill="none"/><rect x="9" y="12" width="6" height="6" fill="#f2a42e"/><rect x="9" y="24" width="6" height="6" fill="#f2a42e"/><path d="M22 31l9-11h-6V2h-6v18h-6z" fill="#4f7fb4"/></symbol>
  <symbol id="p-info" viewBox="0 0 32 32"><circle cx="16" cy="16" r="13" fill="#6b9bd1" stroke="#4a7bad"/></symbol>
  <symbol id="t-star" viewBox="0 0 32 32"><path d="M16 1l4.500 10.500L32 13l-8.500 7.500L26 31l-10-5.500L6 31l2.500-10.500L0 13l11.500-1.500z" fill="#fde13a" stroke="#b3982f" stroke-width="1.500"/></symbol>
  <symbol id="t-bm" viewBox="0 0 32 32"><path d="M6 2h25v27H5l-3-1V4c0-2 4-3 4-2z" fill="#e8e8e8" stroke="#888"/><path d="M2 28c3 0 5-1 5-4V2" fill="none" stroke="#999"/><path d="M16 1h7v11l-3.500 4-3.500-4z" fill="#6b9bd1"/></symbol>
  <symbol id="t-home" viewBox="0 0 32 32"><path d="M3 3h12l4 5h11v21H3z" fill="#e9e9e9" stroke="#8f8f8f"/><path d="M16 10l-9 9h3v7h12v-7h3z" fill="#e9e9e9" stroke="#111" stroke-width="2"/></symbol>
  <symbol id="t-folder" viewBox="0 0 32 32"><path d="M3 3h12l4 5h11v21H3z" fill="#e9e9e9" stroke="#8f8f8f"/></symbol>
  <symbol id="t-gpkg" viewBox="0 0 32 32"><path d="M1 15l15 15 15-15-4-7H5z" fill="#d9b50c" stroke="#111"/><path d="M16 19l15-5v5L16 30z" fill="#f7ee6a" stroke="#111"/><path d="M1 14l15 5v11L1 19z" fill="#c9a204" stroke="#111"/><circle cx="16" cy="10" r="9" fill="#6b9bd1" stroke="#4a6f9a"/><path d="M10 6l5 2-1 5-4-3zM18 3l5 2-2 4-3-1z" fill="#2f4f73"/></symbol>
  <symbol id="t-feather" viewBox="0 0 32 32"><path d="M1 31C3 18 12 6 31 1c-1 6-3 9-6 12-1 4-4 6-7 8-4 2-9 2-12 5z" fill="#a6c8ee" stroke="#375f90"/><path d="M1 31C9 20 16 10 27 4" stroke="#2d5a8f" fill="none"/></symbol>
  <symbol id="t-pg" viewBox="0 0 32 32"><path d="M1 7c1-5 9-6 14-4 5-3 13-3 15 2 2 6-2 11-5 13-2 2-4 2-6 2 0 4 1 9-3 11-4 1-5-3-5-8-2 1-4 0-6-2C3 18 0 12 1 7z" fill="#5f8fc0" stroke="#2f5a8c"/><path d="M12 6c-3 5-2 11 1 15M20 7c2 4 1 9-2 13" fill="none" stroke="#bcd6ef" stroke-width="1.500"/></symbol>
  <symbol id="t-mssql" viewBox="0 0 32 32"><path d="M1 1c10 3 21 6 31 14-9 4-20 8-31 16 5-9 5-22 0-30z" fill="#5f8fc0" stroke="#2f5a8c"/><path d="M9 4c3 7 3 14 1 21M16 6c2 5 2 11 0 16M23 10c1 3 1 6 0 8" fill="none" stroke="#1f3d63" stroke-width="1.500"/></symbol>
  <symbol id="t-db2" viewBox="0 0 32 32"><rect width="32" height="32" rx="5" fill="#6595cb"/></symbol>
  <symbol id="t-globe" viewBox="0 0 32 32"><ellipse cx="16" cy="16" rx="16" ry="14" fill="#5f8fc0"/><ellipse cx="16" cy="16" rx="7" ry="14" fill="none" stroke="#cfe0f2" stroke-width="1.500"/><path d="M16 2v28M0 16h32M3 8c8 2 18 2 26 0M3 24c8-2 18-2 26 0" fill="none" stroke="#cfe0f2" stroke-width="1.500"/></symbol>
  <symbol id="t-osm" viewBox="0 0 32 32"><rect x="0" y="0" width="10" height="10" fill="#243a5c"/><rect x="10" y="0" width="11" height="10" fill="#a9c8e8"/><rect x="21" y="0" width="11" height="10" fill="#243a5c"/><rect x="0" y="10" width="10" height="11" fill="#a9c8e8"/><rect x="10" y="10" width="11" height="11" fill="#243a5c"/><rect x="21" y="10" width="11" height="11" fill="#a9c8e8"/><rect x="0" y="21" width="10" height="11" fill="#243a5c"/><rect x="10" y="21" width="11" height="11" fill="#a9c8e8"/></symbol>

  <!-- layers panel -->
  <symbol id="l-brush" viewBox="0 0 32 32"><path d="M2 18L8 6l14 8-6 14z" fill="#f2d23a"/><path d="M2 18l4-7 14 8-4 9z" fill="#d8603a"/><path d="M4 14l3-6 7 4-3 6z" fill="#4f7fb4"/><path d="M20 14l10-11" stroke="#d89b3f" stroke-width="3"/><path d="M13 14l9 5-5 9-8-4z" fill="#cda775"/></symbol>
  <symbol id="l-clip" viewBox="0 0 32 32"><path d="M3 13v17h16" fill="none" stroke="#999" stroke-width="1.500"/><rect x="7" y="8" width="20" height="20" fill="#e4e4e4" stroke="#8a8a8a"/><path d="M13 14v10c0 3 5 3 5 0V4c0-3-5-3-5 0" fill="none" stroke="#3f6c9e" stroke-width="2"/><use href="#b-plus" x="19" y="19" width="13" height="13"/></symbol>
  <symbol id="l-eye" viewBox="0 0 32 32"><path d="M1 15C7 5 25 5 31 15 25 25 7 25 1 15z" fill="#f0f0f0" stroke="#888" stroke-width="1.500"/><circle cx="16" cy="14" r="8" fill="#6b9bd1" stroke="#3f6c9e"/><circle cx="16" cy="14" r="3.500" fill="#1a2a3a"/><path d="M2 8c8-7 20-7 28-2" fill="none" stroke="#999" stroke-width="1.500"/><path d="M22 25h11l-5.500 6z" fill="#999"/></symbol>
  <symbol id="l-expr" viewBox="0 0 32 32"><path d="M14 18h15l-3 4v9H17v-9z" fill="#c9c9c9"/></symbol>
  <symbol id="l-rm" viewBox="0 0 32 32"><rect x="2" y="2" width="22" height="23" fill="#ececec" stroke="#8c8c8c" stroke-width="2"/><rect x="17" y="20" width="13" height="10" rx="2" fill="#e2525e"/><path d="M20 25h7" stroke="#fff" stroke-width="2.500"/></symbol>

  <!-- status bar -->
  <symbol id="s-search" viewBox="0 0 26 26"><circle cx="11" cy="11" r="8.500" fill="none" stroke="#8a8a8a" stroke-width="2.500"/><path d="M17 17l8 8" stroke="#8a8a8a" stroke-width="2.500"/></symbol>
  <symbol id="s-mouse" viewBox="0 0 32 32"><path d="M6 2c8-3 14 8 20 14 4 6 2 13-5 14-7 1-10-6-12-12C7 12 2 6 6 2z" fill="#e8e4e2" stroke="#222" stroke-width="1.500"/><path d="M8 3l5 16 8-5C17 9 13 2 8 3z" fill="#111"/><path d="M11 5l4 10" stroke="#fff" stroke-width="2"/><circle cx="19" cy="22" r="4" fill="#111"/><circle cx="19" cy="22" r="1.500" fill="#fff"/><path d="M26 3l1 1M30 1l1 1M23 7l1 1M1 26l1 1M4 28l1 1" stroke="#ddd" stroke-width="1.500"/></symbol>
  <symbol id="s-lock" viewBox="0 0 26 32"><path d="M5 16V10c0-10 16-10 16 0v6" fill="none" stroke="#c4c4c4" stroke-width="3.500"/><rect x="1" y="15" width="24" height="17" rx="2" fill="#707070"/></symbol>
  <symbol id="s-globe" viewBox="0 0 32 32"><circle cx="16" cy="16" r="15" fill="#bdbdbd"/><ellipse cx="16" cy="16" rx="7" ry="15" fill="none" stroke="#3a3a3a" stroke-width="1.600"/><path d="M16 1v30M1 16h30M3 9c8 2 18 2 26 0M3 23c8-2 18-2 26 0" fill="none" stroke="#3a3a3a" stroke-width="1.600"/></symbol>
  <symbol id="s-msg" viewBox="0 0 32 32"><path d="M16 1c8 0 16 5 16 14 0 6-4 10-9 11l4 5c-5 1-10-1-12-4C7 27 0 22 0 14 0 6 8 1 16 1z" fill="#6e6e6e"/><circle cx="9" cy="14" r="2.400" fill="#fff"/><circle cx="16" cy="14" r="2.400" fill="#fff"/><circle cx="23" cy="14" r="2.400" fill="#fff"/></symbol>
  <symbol id="s-grip" viewBox="0 0 26 26"><path d="M20 2h4v4h-4zM20 8h4v4h-4zM14 8h4v4h-4zM20 14h4v4h-4zM14 14h4v4h-4zM8 14h4v4H8zM14 20h4v4h-4zM8 20h4v4H8zM2 20h4v4H2z" fill="#5e5e5e"/></symbol>
</svg>

<div class="win">

  <div class="titlebar">
    <div class="lights">
      <span class="light red"></span>
      <span class="light yellow"></span>
      <span class="light green"></span>
    </div>
    <div class="wintitle">*Untitled Project - QGIS</div>
  </div>

  <div class="bar">
    <i class="grip"></i>
    <div class="tb"><svg class="ic"><use href="#i-new"/></svg></div>
    <div class="tb"><svg class="ic"><use href="#i-open"/></svg></div>
    <div class="tb"><svg class="ic"><use href="#i-save"/></svg></div>
    <div class="tb"><svg class="ic"><use href="#i-layout"/></svg></div>
    <div class="tb"><svg class="ic"><use href="#i-layoutmgr"/></svg></div>
    <div class="tb"><svg class="ic" viewBox="0 0 48 48"><use href="#i-style"/><text class="g-a" x="34" y="42">a</text></svg></div>
    <i class="grip"></i>
    <div class="tb"><div class="pressed"><svg class="ic ic-hand"><use href="#i-hand"/></svg></div></div>
    <div class="tb"><svg class="ic"><use href="#i-pan"/></svg></div>
    <div class="tb"><svg class="ic"><use href="#i-zin"/></svg></div>
    <div class="tb"><svg class="ic"><use href="#i-zout"/></svg></div>
    <div class="tb"><svg class="ic"><use href="#i-zfull"/></svg></div>
    <div class="tb"><svg class="ic"><use href="#i-zsel"/></svg></div>
    <div class="tb"><svg class="ic"><use href="#i-zlayer"/></svg></div>
    <div class="tb"><svg class="ic" viewBox="0 0 48 48"><use href="#i-z11"/><text class="g-11" x="30" y="23">1:1</text></svg></div>
    <div class="tb"><svg class="ic"><use href="#i-zlast"/></svg></div>
    <div class="tb"><svg class="ic"><use href="#i-znext"/></svg></div>
    <div class="tb"><svg class="ic"><use href="#i-newmap"/></svg></div>
    <div class="tb"><svg class="ic"><use href="#i-newbm"/></svg></div>
    <div class="tb"><svg class="ic"><use href="#i-bm"/></svg></div>
    <div class="tb"><svg class="ic"><use href="#i-refresh"/></svg></div>
    <i class="grip"></i>
    <div class="tb"><svg class="ic" viewBox="0 0 48 48"><use href="#i-identify"/><text class="g-i" x="16" y="28">i</text><use href="#i-cursor"/></svg></div>
    <div class="tb"><svg class="ic"><use href="#i-actions"/></svg></div><div class="mn"><i class="arr"></i></div>
    <div class="tb"><svg class="ic"><use href="#i-select"/></svg></div><div class="mn"><i class="arr"></i></div>
    <div class="tb"><svg class="ic"><use href="#i-selby"/></svg></div><div class="mn"><i class="arr"></i></div>
    <div class="tb"><svg class="ic"><use href="#i-desel"/></svg></div>
    <div class="tb"><svg class="ic"><use href="#i-table"/></svg></div>
    <div class="tb"><svg class="ic"><use href="#i-calc"/></svg></div>
    <div class="tb"><svg class="ic"><use href="#i-gear"/></svg></div>
    <div class="tb"><span class="g-sigma">&Sigma;</span></div>
    <div class="tb"><svg class="ic"><use href="#i-measure"/></svg></div><div class="mn"><i class="arr"></i></div>
    <div class="tb"><svg class="ic"><use href="#i-annot"/></svg></div>
  </div>

  <div class="bar">
    <i class="grip"></i>
    <div class="tb"><svg class="ic"><use href="#i-dsm"/></svg></div>
    <div class="tb"><svg class="ic"><use href="#i-gpkg"/></svg></div>
    <div class="tb"><svg class="ic"><use href="#i-verts"/></svg></div>
    <div class="tb"><svg class="ic"><use href="#i-feather"/></svg></div>
    <div class="tb"><svg class="ic"><use href="#i-mesh"/></svg></div>
    <i class="sep"></i>
    <div class="tb tb-tight"><svg class="ic"><use href="#i-virtual"/></svg></div>
    <i class="grip near wide"></i>
    <div class="tb tb-w65"><svg class="ic"><use href="#i-pencils"/></svg><i class="arr arr-corner"></i></div>
    <div class="tb"><svg class="ic"><use href="#i-pencil"/></svg></div>
    <div class="tb"><svg class="ic"><use href="#i-saveedit"/></svg></div>
    <div class="tb"><svg class="ic"><use href="#i-addfeat"/></svg></div>
    <div class="tb"><svg class="ic"><use href="#i-vtool"/></svg></div><div class="mn"><i class="arr"></i></div>
    <div class="tb"><svg class="ic"><use href="#i-modattr"/></svg></div>
    <div class="tb"><svg class="ic"><use href="#i-del"/></svg></div>
    <div class="tb"><svg class="ic"><use href="#i-cut"/></svg></div>
    <div class="tb"><svg class="ic"><use href="#i-copy"/></svg></div>
    <div class="tb"><svg class="ic"><use href="#i-paste"/></svg></div>
    <div class="tb"><svg class="ic"><use href="#i-undo"/></svg></div>
    <div class="tb"><svg class="ic"><use href="#i-redo"/></svg></div>
    <i class="grip tight"></i>
    <div class="tb"><svg class="ic" viewBox="0 0 48 48"><use href="#i-abc"/><text class="g-lab" x="27" y="26">abc</text></svg></div>
    <div class="tb"><svg class="ic"><use href="#i-diagram"/></svg></div>
    <i class="sep"></i>
    <div class="tb"><svg class="ic" viewBox="0 0 48 48"><use href="#i-pin"/><text class="g-lab" x="21" y="26">ab</text></svg></div>
    <div class="tb"><svg class="ic" viewBox="0 0 48 48"><use href="#i-hl"/><text class="g-lab g-red" x="28" y="26">abc</text></svg></div>
    <i class="sep sep-t"></i>
    <div class="tb"><svg class="ic" viewBox="0 0 48 48"><use href="#i-pinoff"/><text class="g-lab g-off" x="20" y="25">ab</text></svg></div>
    <div class="tb"><svg class="ic" viewBox="0 0 48 48"><use href="#i-eyeoff"/><text class="g-lab g-off" x="27" y="25">abc</text></svg></div>
    <div class="tb"><svg class="ic" viewBox="0 0 48 48"><use href="#i-arrowoff"/><text class="g-lab g-off" x="27" y="25">abc</text></svg></div>
    <div class="tb"><svg class="ic" viewBox="0 0 48 48"><use href="#i-rotoff"/><text class="g-lab g-off" x="27" y="25">abc</text></svg></div>
    <div class="tb"><svg class="ic" viewBox="0 0 48 48"><use href="#i-chgoff"/><text class="g-lab g-off" x="27" y="25">abc</text></svg></div>
    <i class="grip wide"></i>
    <div class="tb"><svg class="ic ic-big"><use href="#i-globe"/></svg></div>
    <div class="chev">&raquo;</div>
    <i class="grip"></i>
    <div class="tb"><svg class="ic"><use href="#i-python"/></svg></div>
    <div class="chev">&raquo;</div>
    <i class="grip"></i>
    <div class="tb"><svg class="ic" viewBox="0 0 48 48"><use href="#i-help"/><text class="g-help" x="29" y="34">?</text></svg></div>
  </div>

  <div class="bar bar-last">
    <i class="grip"></i>
    <div class="tb"><svg class="ic"><use href="#i-curve"/></svg></div><div class="mn"><i class="arr"></i></div>
    <div class="tb"><svg class="ic"><use href="#i-circle"/></svg></div><div class="mn"><i class="arr"></i></div>
    <div class="tb"><svg class="ic"><use href="#i-ellipse"/></svg></div><div class="mn"><i class="arr"></i></div>
    <div class="tb"><svg class="ic"><use href="#i-rect"/></svg></div><div class="mn"><i class="arr"></i></div>
    <div class="tb"><svg class="ic"><use href="#i-poly"/></svg></div><div class="mn"><i class="arr"></i></div>
    <i class="grip"></i>
    <div class="tb"><svg class="ic"><use href="#i-hub"/></svg></div>
    <div class="tb"><svg class="ic"><use href="#i-map"/></svg></div>
  </div>

  <div class="main">
    <div class="dock">

      <div class="panel panel-browser">
        <div class="ptitle">
          <span>Browser</span>
          <span class="pbtns"><i class="pfloat"></i><i class="pclose"></i></span>
        </div>
        <div class="ptools">
          <div class="pt"><svg class="ip"><use href="#p-add"/></svg></div>
          <div class="pt"><svg class="ip"><use href="#i-refresh"/></svg></div>
          <div class="pt"><svg class="ip"><use href="#p-funnel"/></svg></div>
          <div class="pt"><svg class="ip"><use href="#p-collapse"/></svg></div>
          <div class="pt"><svg class="ip" viewBox="0 0 32 32"><use href="#p-info"/><text class="g-pi" x="16" y="24">i</text></svg></div>
        </div>
        <div class="tree tree-browser">
          <div class="rows">
            <div class="row"><span class="tw"></span><svg class="it"><use href="#t-star"/></svg><span class="tx">Favorites</span></div>
            <div class="row"><span class="tw"><i class="tri-r"></i></span><svg class="it"><use href="#t-bm"/></svg><span class="tx">Spatial Bookmarks</span></div>
            <div class="row"><span class="tw"><i class="tri-r"></i></span><svg class="it"><use href="#t-home"/></svg><span class="tx">Home</span></div>
            <div class="row"><span class="tw"><i class="tri-r"></i></span><svg class="it"><use href="#t-folder"/></svg><span class="tx">/</span></div>
            <div class="row"><span class="tw"><i class="tri-r"></i></span><svg class="it"><use href="#t-folder"/></svg><span class="tx">/Volumes</span></div>
            <div class="row"><span class="tw"></span><svg class="it"><use href="#t-gpkg"/></svg><span class="tx">GeoPackage</span></div>
            <div class="row"><span class="tw"></span><svg class="it"><use href="#t-feather"/></svg><span class="tx">SpatiaLite</span></div>
            <div class="row"><span class="tw"></span><svg class="it"><use href="#t-pg"/></svg><span class="tx">PostGIS</span></div>
            <div class="row"><span class="tw"></span><svg class="it"><use href="#t-mssql"/></svg><span class="tx">MSSQL</span></div>
            <div class="row"><span class="tw"></span><svg class="it" viewBox="0 0 32 32"><use href="#t-db2"/><text class="g-db2" x="16" y="20">DB2</text></svg><span class="tx">DB2</span></div>
            <div class="row"><span class="tw"></span><svg class="it"><use href="#t-globe"/></svg><span class="tx">WMS/WMTS</span></div>
            <div class="row"><span class="tw"><i class="tri-d"></i></span><svg class="it"><use href="#t-globe"/></svg><span class="tx">XYZ Tiles</span></div>
            <div class="row row-sub"><span class="tw"></span><svg class="it it-osm"><use href="#t-osm"/></svg><span class="tx">OpenStreetMap</span></div>
          </div>
          <div class="vscroll">
            <div class="sbtn"><i class="tri-up"></i></div>
            <div class="vthumb"></div>
            <div class="strack"></div>
            <div class="sbtn"><i class="tri-dn"></i></div>
          </div>
        </div>
      </div>

      <div class="hsplit"><i class="hgrip"></i></div>

      <div class="panel panel-layers">
        <div class="ptitle">
          <span>Layers</span>
          <span class="pbtns"><i class="pfloat"></i><i class="pclose"></i></span>
        </div>
        <div class="ptools">
          <div class="pt"><svg class="ip"><use href="#l-brush"/></svg></div>
          <div class="pt"><svg class="ip"><use href="#l-clip"/></svg></div>
          <div class="pt"><svg class="ip ip-wide"><use href="#l-eye"/></svg></div>
          <div class="pt"><svg class="ip"><use href="#p-funnel"/></svg></div>
          <div class="pt pt-menu"><svg class="ip" viewBox="0 0 32 32"><use href="#l-expr"/><text class="g-eps" x="9" y="22">&epsilon;</text></svg><i class="arr arr-s"></i></div>
          <div class="pt"><svg class="ip"><use href="#p-expand"/></svg></div>
          <div class="pt"><svg class="ip"><use href="#p-collapse"/></svg></div>
          <div class="pt"><svg class="ip"><use href="#l-rm"/></svg></div>
        </div>
        <div class="tree tree-layers">
          <div class="layer-row"><span class="tw"></span><span class="chk"><svg class="ck"><use href="#s-check"/></svg></span><span class="swatch sw-pink"></span><span class="lname">cambridge-tracts-extracted</span></div>
          <div class="layer-row"><span class="tw"><i class="tri-d"></i></span><span class="chk"><svg class="ck"><use href="#s-check"/></svg></span><span class="swatch sw-red"></span><span class="lname">cambridge</span></div>
          <div class="opacity-row">
            <span class="op-label">Opacity</span>
            <div class="slider"><span class="slider-fill"></span><span class="slider-knob"></span><span class="slider-rest"></span></div>
          </div>
          <div class="layer-row layer-sel"><span class="tw"></span><span class="chk"><svg class="ck"><use href="#s-check"/></svg></span><span class="swatch sw-orange"></span><span class="lname">ma-tracts-2019 Massachusetts</span><i class="cutoff"></i></div>
        </div>
        <div class="hscroll">
          <div class="sbtn sbtn-h"><i class="tri-l"></i></div>
          <div class="hthumb"></div>
          <div class="strack"></div>
          <div class="sbtn sbtn-h"><i class="tri-r tri-r-b"></i></div>
        </div>
      </div>
    </div>

    <div class="vsplit"><i class="vgrip"></i></div>

    <div class="canvas">
      <svg class="map" viewBox="670 368 1732 1150" preserveAspectRatio="none">
        <rect x="670" y="368" width="1732" height="1150" fill="#ff9f17"/>
        <path fill="#dc762f" d="M1566 368L1577 399V433L1521 650L1452 923L1448 950L1439 973L1420 1004L1388 1031L1378 1050L1353 1074L1323 1090L1279 1100L920 1147L931 1166L1158 1518H2402V368Z"/>
        <path fill="none" stroke="#a8701d" stroke-width="2" d="M1566 368L1577 399V433L1521 650L1452 923L1448 950L1439 973L1420 1004L1388 1031L1378 1050L1353 1074L1323 1090L1279 1100L920 1147L931 1166"/>
        <path fill="none" stroke="#6d3b3a" stroke-width="2.500" d="M1580 368L1585 387L1587 407V433L1583 463L1580 480L1533 650L1461 950L1447 984L1422 1017L1402 1048L1378 1069L1353 1087L1323 1101L1276 1111L1210 1118L1126 1131L1020 1146L947 1162"/>
        <path fill="none" stroke="#2b2b2b" stroke-width="2" d="M947 1162L901 1179L884 1169L858 1160L832 1156L790 1156L670 1161M931 1166L1158 1518"/>
        <path fill="none" stroke="#6d3b3a" stroke-width="2" d="M2344 368L2402 375"/>
      </svg>
    </div>
  </div>

  <div class="status">
    <div class="locator"><svg class="s-search"><use href="#s-search"/></svg><span>Type to locate (&#8984;K)</span></div>
    <span class="lb lb-coord">Coordinate</span>
    <div class="field f-coord">-71.15298,42.38711</div>
    <svg class="s-mouse"><use href="#s-mouse"/></svg>
    <span class="lb lb-scale">Scale</span>
    <div class="field f-scale"><span>1:3337</span><span class="combo-btn"><i class="tri-dn tri-dark"></i></span></div>
    <svg class="s-lock"><use href="#s-lock"/></svg>
    <span class="lb lb-mag">Magnifier</span>
    <div class="field f-mag"><span>100%</span><span class="spin"><i class="tri-up"></i><i class="tri-dn"></i></span></div>
    <span class="lb lb-rot">Rotation</span>
    <div class="field f-rot"><span>0.0 &deg;</span><span class="spin"><i class="tri-up"></i><i class="tri-dn"></i></span></div>
    <span class="chk chk-render"><svg class="ck"><use href="#s-check"/></svg></span>
    <span class="lb lb-render">Render</span>
    <svg class="s-globe"><use href="#s-globe"/></svg>
    <span class="lb lb-epsg">EPSG:4326</span>
    <svg class="s-msg"><use href="#s-msg"/></svg>
    <svg class="sizegrip"><use href="#s-grip"/></svg>
  </div>

</div>

</body>
</html>
```

FILE: styles.css
```css
* {
  box-sizing: border-box;
}
html, body {
  margin: 0;
  padding: 0;
  height: 100%;
  overflow: hidden;
}
body {
  background-color: #fff;
  font-family: Inter, "Noto Sans", sans-serif;
  font-size: 26px;
  letter-spacing: -0.12px;
  color: #f0f0f0;
}
.defs {
  position: absolute;
  width: 0;
  height: 0;
  overflow: hidden;
}
i {
  display: block;
}

/* text inside icons */
svg text {
  letter-spacing: 0;
  text-anchor: middle;
}
.g-a {
  font: 22px "Liberation Sans", sans-serif;
  fill: #222;
  stroke: #bbb;
  stroke-width: 1.4px;
}
.g-11 {
  font: bold 16px "Liberation Sans", sans-serif;
  fill: #2c2c2c;
}
.g-i {
  font: italic bold 27px "Liberation Serif", serif;
  fill: #fff;
}
.g-pi {
  font: italic bold 22px "Liberation Serif", serif;
  fill: #fff;
}
.g-sigma {
  font: 58px/48px "Liberation Serif", serif;
  letter-spacing: 0;
  color: #a4009c;
}
.g-lab {
  font: bold 18px "Liberation Sans", sans-serif;
  fill: #222;
}
.g-red { fill: #f00006; }
.g-off { fill: #7c7c72; }
.g-help {
  font: 30px "Liberation Serif", serif;
  fill: #fff;
}
.g-db2 {
  font: 11px "Liberation Sans", sans-serif;
  fill: #eaf2fb;
}
.g-eps {
  font: 24px "Liberation Serif", serif;
  fill: #6d3b8c;
}

/* window */
.win {
  position: relative;
  margin: 75px 0 0 112px;
  width: 2292px;
  height: 1505px;
  display: flex;
  flex-direction: column;
  background-color: #333;
  border: 1px solid #5e5e5e;
  border-radius: 20px;
  box-shadow: 0 0 0 1px #1c1c1c, 0 36px 100px rgba(0, 0, 0, 0.7);
  overflow: hidden;
}
.titlebar {
  position: relative;
  flex: none;
  height: 57px;
  display: flex;
  align-items: center;
  justify-content: center;
  background-color: #3a3937;
  border-bottom: 2px solid #141414;
}
.lights {
  position: absolute;
  left: 15px;
  top: 16px;
  display: flex;
  gap: 16px;
}
.light {
  width: 24px;
  height: 24px;
  border-radius: 50%;
}
.red { background-color: #ee6a5e; }
.yellow { background-color: #f5bd4f; }
.green { background-color: #61c454; }
.wintitle {
  font-weight: 700;
  font-size: 26px;
  letter-spacing: 0.2px;
  color: #a9a9a9;
  margin: -2px 0 0 -4px;
}

/* toolbars */
.bar {
  flex: none;
  height: 78px;
  display: flex;
  align-items: center;
  padding: 0 0 0 9px;
  background-color: #333;
  border-bottom: 2px solid #6a6a6a;
  box-shadow: inset 0 -3px 0 #2c2c2c;
}
.bar-last {
  height: 76px;
}
.grip {
  flex: none;
  width: 11px;
  height: 34px;
  margin: 0 4px 0 17px;
  background:
    linear-gradient(90deg, transparent 4px, #333 4px, #333 7px, transparent 7px),
    repeating-linear-gradient(#6e6e6e 0, #6e6e6e 4px, transparent 4px, transparent 6px);
}
.bar > .grip:first-child {
  margin-left: 0;
}
.grip.near { margin-left: 13px; }
.grip.wide { margin-right: 6px; }
.grip.tight { margin-right: 1px; }
.tb {
  position: relative;
  flex: none;
  width: 66px;
  height: 62px;
  display: flex;
  align-items: center;
  justify-content: center;
}
.tb-w65 {
  width: 65px;
}
.ic {
  display: block;
  width: 48px;
  height: 48px;
}
.ic-big {
  width: 54px;
  height: 54px;
}
.ic-hand {
  margin-left: 3px;
}
.pressed {
  width: 62px;
  height: 61px;
  display: flex;
  align-items: center;
  justify-content: center;
  background-color: #3c3c3c;
  border: 2px solid #242424;
  border-radius: 6px;
  box-shadow: inset 0 0 0 1px #4a4a4a;
}
.mn {
  flex: none;
  width: 24px;
  display: flex;
  justify-content: center;
}
.arr {
  width: 0;
  height: 0;
  border-left: 8px solid transparent;
  border-right: 8px solid transparent;
  border-top: 9px solid #9c9c9c;
}
.arr-corner {
  position: absolute;
  right: 5px;
  bottom: 3px;
  border-left-width: 6px;
  border-right-width: 6px;
  border-top-width: 7px;
}
.arr-s {
  margin-left: 12px;
}
.sep {
  flex: none;
  width: 1px;
  height: 38px;
  margin: 0 8px;
  background-color: #272727;
}
.sep-t {
  margin-right: 5px;
}
.chev {
  flex: none;
  width: 26px;
  text-align: center;
  font-size: 40px;
  line-height: 40px;
  color: #393939;
}

/* main area */
.main {
  flex: none;
  height: 1150px;
  display: flex;
  margin-top: 3px;
}
.dock {
  flex: none;
  width: 541px;
  display: flex;
  flex-direction: column;
}
.vsplit {
  flex: none;
  width: 16px;
  display: flex;
  align-items: center;
  justify-content: center;
}
.vgrip {
  width: 4px;
  height: 34px;
  margin-left: 4px;
  margin-top: 8px;
  background: repeating-linear-gradient(#6e6e6e 0, #6e6e6e 4px, transparent 4px, transparent 6px);
}
.canvas {
  flex: 1;
  min-width: 0;
}
.map {
  display: block;
  width: 100%;
  height: 100%;
}

/* dock panels */
.panel {
  display: flex;
  flex-direction: column;
}
.panel-browser {
  flex: none;
}
.panel-layers {
  flex: 1;
  min-height: 0;
  padding-top: 2px;
}
.ptitle {
  flex: none;
  height: 34px;
  display: flex;
  align-items: center;
  justify-content: space-between;
  padding: 0 3px 0 7px;
  font-size: 22px;
  color: #c9c9c9;
}
.pbtns {
  display: flex;
  gap: 7px;
}
.pfloat, .pclose {
  position: relative;
  width: 21px;
  height: 21px;
  border: 2px dotted #6e6e6e;
}
.pfloat::after {
  content: "";
  position: absolute;
  left: 1px;
  top: 4px;
  width: 11px;
  height: 11px;
  border: 2px solid #6e6e6e;
}
.pfloat::before {
  content: "";
  position: absolute;
  left: 5px;
  top: 0;
  width: 11px;
  height: 11px;
  border: 2px solid #6e6e6e;
}
.pclose {
  background:
    linear-gradient(45deg, transparent 44%, #777 44%, #777 56%, transparent 56%),
    linear-gradient(-45deg, transparent 44%, #777 44%, #777 56%, transparent 56%);
}
.ptools {
  flex: none;
  height: 64px;
  display: flex;
  align-items: center;
  padding-left: 6px;
}
.pt {
  flex: none;
  width: 50px;
  display: flex;
  align-items: center;
  justify-content: center;
}
.pt-menu {
  width: 75px;
  justify-content: flex-start;
  padding-left: 11px;
}
.ip {
  display: block;
  width: 30px;
  height: 30px;
}
.ip-wide {
  width: 34px;
  height: 34px;
}
.tree {
  background-color: #1e1e1e;
  border-top: 1px solid #2a2a2a;
}
.tree-browser {
  height: 470px;
  display: flex;
}
.rows {
  flex: 1;
  min-width: 0;
  overflow: hidden;
}
.row {
  height: 36px;
  display: flex;
  align-items: center;
}
.tw {
  flex: none;
  width: 42px;
  display: flex;
  justify-content: center;
}
.it {
  flex: none;
  width: 32px;
  height: 32px;
  margin-left: 5px;
}
.tx {
  margin-left: 12px;
  white-space: nowrap;
  color: #f2f2f2;
}
.row-sub {
  padding-left: 40px;
}
.it-osm {
  width: 26px;
  height: 26px;
  margin: 0 3px 0 8px;
}
.tri-r, .tri-l, .tri-d, .tri-up, .tri-dn {
  width: 0;
  height: 0;
}
.tri-r {
  border-top: 7px solid transparent;
  border-bottom: 7px solid transparent;
  border-left: 8px solid #8e8e8e;
}
.tri-r-b {
  border-left-color: #a0a0a0;
}
.tri-l {
  border-top: 9px solid transparent;
  border-bottom: 9px solid transparent;
  border-right: 8px solid #a0a0a0;
}
.tri-d {
  border-left: 8px solid transparent;
  border-right: 8px solid transparent;
  border-top: 7px solid #8e8e8e;
}
.tri-up {
  border-left: 8px solid transparent;
  border-right: 8px solid transparent;
  border-bottom: 8px solid #b0b0b0;
}
.tri-dn {
  border-left: 8px solid transparent;
  border-right: 8px solid transparent;
  border-top: 8px solid #b0b0b0;
}
.tri-dark {
  border-top-color: #222;
  border-left-width: 8px;
  border-right-width: 8px;
  border-top-width: 9px;
}

/* scrollbars */
.vscroll {
  flex: none;
  width: 27px;
  display: flex;
  flex-direction: column;
  background-color: #333;
}
.sbtn {
  flex: none;
  height: 26px;
  display: flex;
  align-items: center;
  justify-content: center;
  background-color: #3c3c3c;
  border: 2px solid #4e4e4e;
}
.sbtn-h {
  width: 26px;
  height: 100%;
}
.vthumb {
  flex: none;
  height: 281px;
  margin-top: 1px;
  background-color: #3d3d3d;
  border: 2px solid #525252;
}
.strack {
  flex: 1;
}
.hscroll {
  flex: none;
  height: 27px;
  display: flex;
  margin-bottom: 1px;
  padding: 0 0 0 1px;
  background-color: #3a3a3a;
  border-top: 2px solid #333;
}
.hthumb {
  flex: none;
  width: 407px;
  margin-left: 2px;
  background-color: #404040;
  border: 2px solid #505050;
}

/* panel splitter */
.hsplit {
  flex: none;
  height: 14px;
  display: flex;
  justify-content: center;
}
.hgrip {
  width: 34px;
  height: 4px;
  margin-top: 6px;
  background: repeating-linear-gradient(90deg, #6e6e6e 0, #6e6e6e 4px, transparent 4px, transparent 6px);
}

/* layer tree */
.tree-layers {
  flex: 1;
  min-height: 0;
}
.layer-row {
  position: relative;
  height: 36px;
  display: flex;
  align-items: center;
  overflow: hidden;
}
.chk {
  flex: none;
  width: 27px;
  height: 27px;
  margin-left: 5px;
  display: flex;
  align-items: center;
  justify-content: center;
  background-color: #232323;
  color: #b8b8b8;
}
.ck {
  display: block;
  width: 24px;
  height: 24px;
}
.swatch {
  flex: none;
  width: 31px;
  height: 32px;
  margin-left: 13px;
}
.sw-pink { background-color: #e05587; box-shadow: inset 0 0 0 2px #c94a78; }
.sw-red { background-color: #b84a4e; box-shadow: inset 0 0 0 2px #a34145; }
.sw-orange { background-color: #d98b25; box-shadow: inset 0 0 0 2px #bf7a20; }
.lname {
  margin-left: 13px;
  white-space: nowrap;
  font-weight: 700;
  letter-spacing: 0.45px;
  color: #dedede;
}
.layer-sel {
  background-color: #434343;
}
.layer-sel .chk {
  background-color: #1e1e1e;
  color: #d8d8d8;
}
.layer-sel .lname {
  color: #fff;
  text-decoration: underline;
}
.cutoff {
  position: absolute;
  right: 2px;
  top: 2px;
  width: 6px;
  height: 32px;
  background-color: #1e1e1e;
}
.opacity-row {
  height: 69px;
  padding-left: 99px;
  display: flex;
  align-items: center;
}
.op-label {
  width: 112px;
  color: #f2f2f2;
}
.slider {
  display: flex;
  align-items: center;
}
.slider-fill {
  width: 82px;
  height: 6px;
  background-color: #5aa0f0;
}
.slider-knob {
  width: 23px;
  height: 23px;
  margin: 0 2px;
  background-color: #454545;
  border: 1px solid #292929;
  border-radius: 5px;
}
.slider-rest {
  width: 94px;
  height: 6px;
  background-color: #323232;
}

/* status bar */
.status {
  position: relative;
  flex: 1;
  display: flex;
  align-items: center;
  padding: 2px 0 0 7px;
  font-size: 22px;
  letter-spacing: -0.1px;
}
.locator {
  flex: none;
  width: 431px;
  height: 46px;
  display: flex;
  align-items: center;
  background-color: #1e1e1e;
  border-radius: 6px;
  font-size: 25.5px;
  color: #8a8a8a;
}
.s-search {
  width: 26px;
  height: 26px;
  margin: 0 15px 0 18px;
}
.lb {
  flex: none;
  white-space: nowrap;
  color: #f0f0f0;
}
.lb-coord { width: 118px; margin-left: 51px; }
.lb-scale { width: 60px; margin-left: 26px; }
.lb-mag { width: 102px; margin-left: 16px; }
.lb-rot { width: 102px; margin-left: 17px; }
.lb-render { width: 105px; margin-left: 11px; color: #c8c8c8; }
.lb-epsg { width: 168px; color: #c8c8c8; }
.field {
  flex: none;
  height: 44px;
  display: flex;
  align-items: center;
  justify-content: space-between;
  background-color: #1e1e1e;
  border-radius: 5px;
  white-space: nowrap;
  overflow: hidden;
}
.f-coord {
  width: 256px;
  padding-left: 20px;
  font-variant-numeric: tabular-nums;
  letter-spacing: -0.95px;
}
.f-scale { width: 184px; padding-left: 7px; }
.f-mag { width: 192px; padding-left: 9px; }
.f-rot { width: 185px; padding-left: 11px; }
.combo-btn {
  width: 40px;
  height: 100%;
  display: flex;
  align-items: center;
  justify-content: center;
  background-color: #484848;
}
.spin {
  width: 28px;
  height: 100%;
  display: flex;
  flex-direction: column;
  align-items: center;
  justify-content: center;
  gap: 8px;
  background-color: #484848;
}
.s-mouse {
  flex: none;
  width: 30px;
  height: 30px;
  margin-left: 11px;
}
.s-lock {
  flex: none;
  width: 25px;
  height: 31px;
  margin-left: 25px;
}
.chk-render {
  width: 28px;
  height: 28px;
  margin-left: 13px;
}
.s-globe {
  flex: none;
  width: 32px;
  height: 32px;
  margin-right: 4px;
}
.s-msg {
  flex: none;
  width: 33px;
  height: 31px;
}
.sizegrip {
  position: absolute;
  right: 0;
  bottom: 0;
  width: 26px;
  height: 26px;
}
```
